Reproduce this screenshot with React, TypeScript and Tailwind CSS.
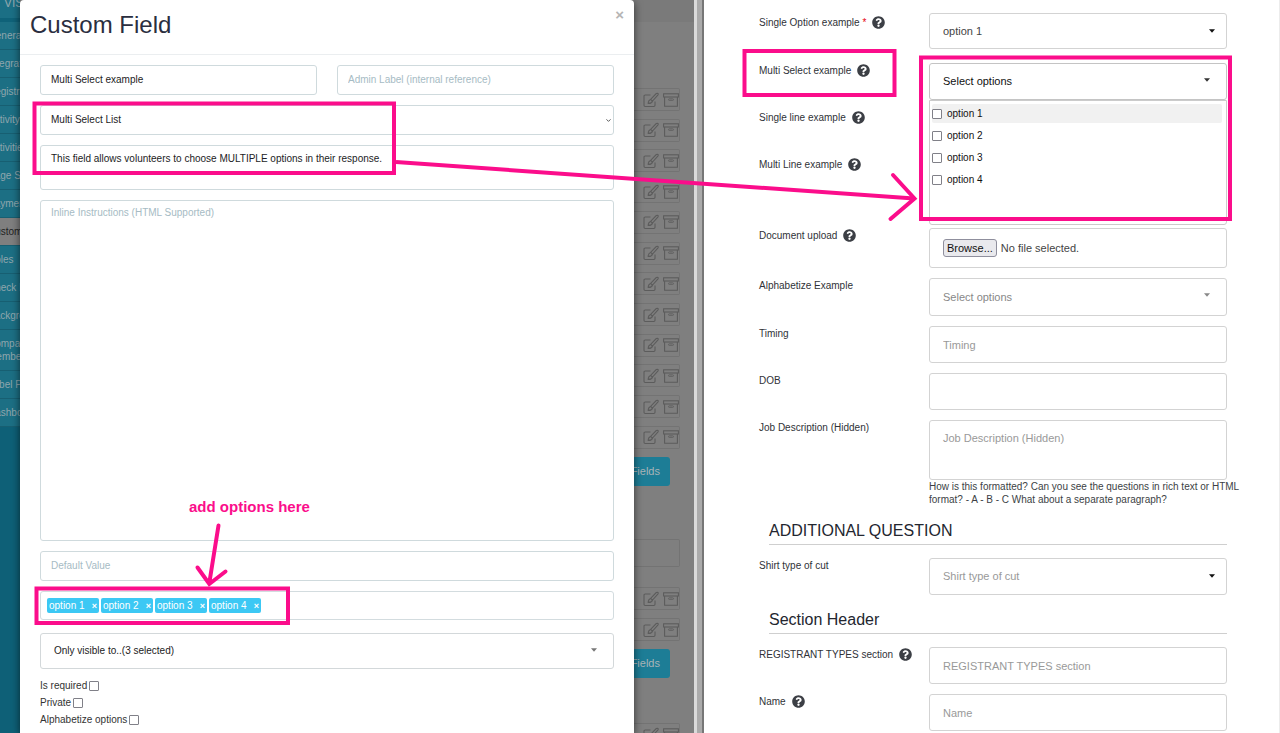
import type { ReactNode } from 'react';
import { FaQuestionCircle } from 'react-icons/fa';
import { ChevronDown } from 'lucide-react';

const NAV_ITEMS = [
  'General',
  'Integrations',
  'Registration',
  'Activity',
  'Activities',
  'Page Setup',
  'Payments',
  'Custom Fields',
  'Roles',
  'Check In',
  'Background',
  'Company Members',
  'Label Printing',
  'Dashboard',
];

const OPTIONS = ['option 1', 'option 2', 'option 3', 'option 4'];

const FLAGS = ['Is required', 'Private', 'Alphabetize options'];

const MODAL_FIELD =
  'block w-full resize-none rounded-[3px] border border-[#cfdadd] bg-white px-[10px] text-[10px] text-[#1c1c24] outline-none placeholder:text-[#a6bbc4]';

const FORM_FIELD =
  'block w-full resize-none rounded-[3px] border border-[#d3d3d3] bg-white px-[13px] text-[11px] text-[#444] outline-none placeholder:text-[#999]';

const CHECKBOX = 'm-0 size-[10px] shrink-0 appearance-none rounded-[1px] border border-[#808088] bg-white';

function Caret({ className }: { className: string }) {
  return (
    <svg viewBox="0 0 6 4" className={`pointer-events-none h-1 w-[6px] ${className}`} fill="currentColor">
      <path d="M0 0.3h6L3 3.8z" />
    </svg>
  );
}

function EditIcon() {
  return (
    <svg viewBox="0 0 16 16" className="size-4" fill="none" stroke="currentColor" strokeWidth="1.1">
      <path d="M7.5 3H2.2Q1 3 1 4.200V13.300Q1 14.500 2.200 14.500H10.800Q12 14.500 12 13.300V9.500" />
      <path d="M14.200 1.200Q15.800 1.500 15 2.800L9.500 9 7.600 7.400 13 1.800Z" />
      <path d="M7.600 7.400Q5.200 8.200 5.200 11.400 8.800 11.600 9.500 9" />
    </svg>
  );
}

function ArchiveIcon() {
  return (
    <svg viewBox="0 0 16 16" className="size-4" fill="none" stroke="currentColor" strokeWidth="1.1">
      <rect x="0.600" y="1.800" width="14.800" height="3.200" />
      <path d="M1.600 5V14.200H14.400V5" />
      <rect x="5.500" y="6.800" width="5" height="1.600" rx="0.800" strokeWidth="0.800" />
    </svg>
  );
}

function ListRow() {
  return (
    <div className="flex h-[23px] items-center justify-end gap-1 rounded-r-[2px] border border-l-0 border-[#737373] text-[#5c5c5c]">
      <EditIcon />
      <ArchiveIcon />
    </div>
  );
}

function AddFieldsButton() {
  return (
    <button
      type="button"
      className="mr-[10px] flex h-[29px] items-center justify-end rounded-r-[3px] bg-[#1d7d96] pr-[10px] text-[11px] whitespace-nowrap text-[#a9b4b8]"
    >
      Add Fields
    </button>
  );
}

function Sidebar() {
  return (
    <nav className="w-5 shrink-0 overflow-hidden bg-[#0e6077] text-[10px] text-[#8fa6ad]">
      <div className="h-[22px] border-b-4 border-[#0f6279] bg-[#1b6f85] pl-1 text-xs leading-[7px]">VIS</div>
      <ul>
        {NAV_ITEMS.map((item) => (
          <li key={item} className={item === 'Custom Fields' ? 'bg-[#7f7f7f] text-[#222]' : 'bg-[#1c6f84]'}>
            <a
              href="#"
              className="-ml-3 block min-h-7 w-[60px] overflow-hidden border-b border-[#175f72] py-[7px] leading-[13px] whitespace-nowrap"
            >
              {item === 'Company Members' ? (
                <>
                  Company
                  <br />
                  Members
                </>
              ) : (
                item
              )}
            </a>
          </li>
        ))}
      </ul>
    </nav>
  );
}

function FieldList() {
  return (
    <div className="w-[60px] shrink-0 overflow-hidden bg-[#7f7f7f]">
      <div className="h-[22px] bg-[#7a7a7a]" />
      <div className="mt-[66px] mr-[14px] flex flex-col">
        <div className="flex h-[361px] flex-col justify-between">
          {Array.from({ length: 12 }, (_, i) => (
            <ListRow key={i} />
          ))}
        </div>
        <div className="mt-2 flex flex-col">
          <AddFieldsButton />
        </div>
        <div className="mt-[53px] h-[28px] rounded-r-[2px] border border-l-0 border-[#737373]" />
        <div className="mt-5 flex flex-col gap-2">
          <ListRow />
          <ListRow />
          <AddFieldsButton />
        </div>
        <div className="mt-[45px]">
          <ListRow />
        </div>
      </div>
    </div>
  );
}

function CustomFieldModal() {
  return (
    <div
      role="dialog"
      aria-label="Custom Field"
      className="relative min-w-0 flex-1 rounded-t-[4px] bg-white shadow-[0_2px_8px_rgba(0,0,0,0.6)]"
    >
      <header className="flex h-[55px] items-start justify-between border-b border-[#ebeef0] pr-[10px] pl-[10px]">
        <h1 className="pt-[9px] text-2xl leading-8 text-[#2a2e40]">Custom Field</h1>
        <button type="button" aria-label="Close" className="pt-[6px] text-[15px] leading-[18px] font-bold text-[#b5b5b5]">
          ×
        </button>
      </header>

      <form className="flex flex-col gap-[10px] px-5 pt-[10px]">
        <div className="grid grid-cols-2 gap-5">
          <input aria-label="Label" defaultValue="Multi Select example" className={`${MODAL_FIELD} h-[30px] pb-[2px]`} />
          <input
            aria-label="Admin Label"
            placeholder="Admin Label (internal reference)"
            className={`${MODAL_FIELD} h-[30px] pb-[2px]`}
          />
        </div>
        <div className="relative">
          <select aria-label="Field type" className={`${MODAL_FIELD} h-[30px] appearance-none pb-[2px]`}>
            <option>Multi Select List</option>
          </select>
          <ChevronDown size={7} strokeWidth={3} className="pointer-events-none absolute top-3 right-[2px] text-[#444]" />
        </div>
        <textarea
          aria-label="Description"
          defaultValue="This field allows volunteers to choose MULTIPLE options in their response."
          className={`${MODAL_FIELD} h-[45px] py-[5px] leading-4`}
        />
        <textarea
          aria-label="Inline Instructions"
          placeholder="Inline Instructions (HTML Supported)"
          className={`${MODAL_FIELD} h-[341px] py-1 leading-4`}
        />
        <input aria-label="Default Value" placeholder="Default Value" className={`${MODAL_FIELD} h-[30px] pb-[2px]`} />
        <div className="flex h-[29px] items-center gap-[2px] rounded-[3px] border border-[#d3dcdf] pl-[6px]">
          {OPTIONS.map((option) => (
            <span
              key={option}
              className="flex h-[15px] w-[52px] items-center justify-between rounded-[2px] bg-[#3cc8f4] px-[2px] text-[10px] text-white"
            >
              {option}
              <button type="button" aria-label={`Remove ${option}`} className="text-[9px] leading-3 font-bold">
                ×
              </button>
            </span>
          ))}
        </div>
        <button
          type="button"
          className="mt-[3px] flex h-9 items-center justify-between rounded-[3px] border border-[#d3d8da] pr-4 pb-[2px] pl-[13px] text-[10px] text-[#222]"
        >
          Only visible to..(3 selected)
          <Caret className="text-[#777]" />
        </button>
        <div className="-mt-[2px] flex flex-col items-start">
          {FLAGS.map((flag) => (
            <label key={flag} className="flex items-center gap-[2px] text-[10px] leading-[17px] text-[#333]">
              {flag}
              <input type="checkbox" className={CHECKBOX} />
            </label>
          ))}
        </div>
      </form>
    </div>
  );
}

type FormRowProps = {
  id: string;
  label: string;
  help?: boolean;
  required?: boolean;
  children: ReactNode;
};

function FormRow({ id, label, help, required, children }: FormRowProps) {
  return (
    <div className={required ? 'flex min-h-10' : 'flex'}>
      <div
        className={`flex w-[170px] shrink-0 items-center text-[10px] text-[#2f3237] ${required ? 'h-[18px]' : 'h-[14px]'}`}
      >
        <label htmlFor={id}>
          {label}
          {required && <span className="text-red-600"> *</span>}
        </label>
        {help && <FaQuestionCircle size={13} className="ml-[6px] text-[#3c3f45]" />}
      </div>
      <div className="relative min-w-0 flex-1">{children}</div>
    </div>
  );
}

function SectionTitle({ children }: { children: ReactNode }) {
  return (
    <h2 className="mb-[3px] ml-[10px] h-[29px] border-b border-[#cfcfcf] text-base leading-[30px] text-[#23262f]">
      {children}
    </h2>
  );
}

function OptionsDropdown() {
  return (
    <div className="absolute inset-x-0 top-[37px] z-10 h-[125px] rounded-b-[3px] border border-[#cbcbcb] bg-white pt-[3px] pr-1 pl-[2px]">
      <div className="flex flex-col gap-[3px]">
        {OPTIONS.map((option, i) => (
          <label
            key={option}
            className={`flex h-[19px] items-center gap-[5px] rounded-[2px] text-[10px] text-[#111] ${i === 0 ? 'bg-[#f1f1f1]' : ''}`}
          >
            <input type="checkbox" className={CHECKBOX} />
            {option}
          </label>
        ))}
      </div>
    </div>
  );
}

function RegistrationForm() {
  return (
    <form className="flex h-screen flex-col gap-[10px] overflow-hidden border-r border-[#ececec] bg-white pt-[13px] pr-[52px] pl-[55px] *:shrink-0">
      <FormRow id="single" label="Single Option example" required help>
        <select id="single" className={`${FORM_FIELD} h-9 appearance-none`}>
          <option>option 1</option>
        </select>
        <Caret className="absolute top-4 right-3 text-[#111]" />
      </FormRow>
      <FormRow id="multi" label="Multi Select example" help>
        <button
          id="multi"
          type="button"
          className="flex h-[37px] w-full items-center justify-between rounded-[3px] border border-[#c4c4c4] pr-4 pl-[13px] text-[11px] text-[#111]"
        >
          Select options
          <Caret className="mb-1 text-[#333]" />
        </button>
        <OptionsDropdown />
      </FormRow>
      <FormRow id="line" label="Single line example" help>
        <input id="line" className={`${FORM_FIELD} h-[37px]`} />
      </FormRow>
      <FormRow id="lines" label="Multi Line example" help>
        <textarea id="lines" className={`${FORM_FIELD} h-[61px]`} />
      </FormRow>
      <FormRow id="upload" label="Document upload" help>
        <div className="flex h-10 items-center gap-1 rounded-[3px] border border-[#d3d3d3] px-[13px] text-[11px] text-[#444]">
          <label
            htmlFor="upload"
            className="flex h-[18px] items-center rounded-[3px] border border-[#8f8f9d] bg-[#e9e9ed] px-[3px] text-[#111]"
          >
            Browse...
          </label>
          <input id="upload" type="file" className="sr-only" />
          <span>No file selected.</span>
        </div>
      </FormRow>
      <FormRow id="alpha" label="Alphabetize Example">
        <button
          id="alpha"
          type="button"
          className="flex h-[38px] w-full items-center justify-between rounded-[3px] border border-[#d3d3d3] pr-4 pl-[13px] text-[11px] text-[#888]"
        >
          Select options
          <Caret className="mb-1 text-[#888]" />
        </button>
      </FormRow>
      <FormRow id="timing" label="Timing">
        <input id="timing" placeholder="Timing" className={`${FORM_FIELD} h-[37px]`} />
      </FormRow>
      <FormRow id="dob" label="DOB">
        <input id="dob" className={`${FORM_FIELD} h-[37px]`} />
      </FormRow>
      <FormRow id="job" label="Job Description (Hidden)">
        <textarea id="job" placeholder="Job Description (Hidden)" className={`${FORM_FIELD} h-[60px] py-[9px] leading-4`} />
        <p className="-mr-4 text-[10px] leading-[13px] text-[#3c3f45]">
          How is this formatted? Can you see the questions in rich text or HTML format? - A - B - C What about a
          separate paragraph?
        </p>
      </FormRow>
      <SectionTitle>ADDITIONAL QUESTION</SectionTitle>
      <FormRow id="shirt" label="Shirt type of cut">
        <select id="shirt" className={`${FORM_FIELD} h-[37px] appearance-none text-[#999]`}>
          <option>Shirt type of cut</option>
        </select>
        <Caret className="absolute top-4 right-3 text-[#111]" />
      </FormRow>
      <SectionTitle>Section Header</SectionTitle>
      <FormRow id="types" label="REGISTRANT TYPES section" help>
        <input id="types" placeholder="REGISTRANT TYPES section" className={`${FORM_FIELD} h-[37px]`} />
      </FormRow>
      <FormRow id="name" label="Name" help>
        <input id="name" placeholder="Name" className={`${FORM_FIELD} h-[37px]`} />
      </FormRow>
    </form>
  );
}

// Pink callouts that tie the field settings to the resulting form control
function Annotations() {
  return (
    <div className="pointer-events-none absolute inset-0 z-20">
      <svg width="1280" height="733" viewBox="0 0 1280 733" fill="none" stroke="#fb0d8b" strokeWidth="4">
        <rect x="34.500" y="103.500" width="359.500" height="69.500" />
        <rect x="36.500" y="588.500" width="251.500" height="34.500" />
        <rect x="744.500" y="51" width="150" height="44" />
        <rect x="921" y="57.500" width="309" height="161.500" />
        <path d="M396 162L914 198.500" />
        <path d="M893 175L914.500 198.500 890.500 219" strokeLinecap="round" />
        <path d="M218.500 525.500L209.300 583M197.500 567.500L209.300 584 225.500 571.500" strokeLinecap="round" />
      </svg>
      <span className="absolute top-[498px] left-[189px] text-[15px] leading-[18px] font-bold text-[#fb0d8b]">
        add options here
      </span>
    </div>
  );
}

export default function App() {
  return (
    <main className="relative grid h-screen grid-cols-[11fr_9fr] overflow-hidden bg-white font-['Liberation_Sans',Arial,sans-serif]">
      <section className="flex h-screen min-w-0 overflow-hidden bg-[#7f7f7f]">
        <Sidebar />
        <CustomFieldModal />
        <FieldList />
        <div className="w-[10px] shrink-0 border-r-2 border-l-3 border-r-[#777] border-l-[#dadada] bg-[#ababab]" />
      </section>
      <RegistrationForm />
      <Annotations />
    </main>
  );
}
